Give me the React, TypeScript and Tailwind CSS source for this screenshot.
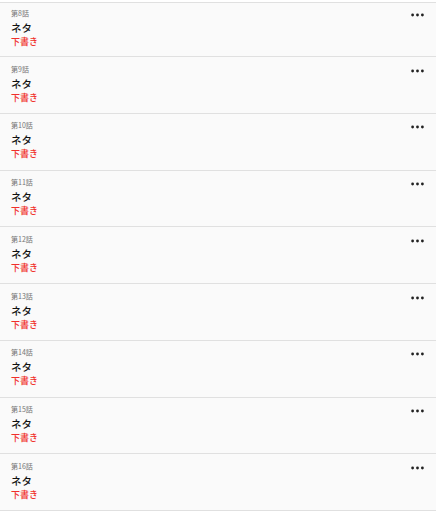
import React from 'react'

const episodes = [8, 9, 10, 11, 12, 13, 14, 15, 16]

function Dots() {
  return (
    <svg width="13" height="4" viewBox="0 0 13 4" className="block">
      <circle cx="1.6" cy="2" r="1.4" fill="#212121" />
      <circle cx="6.5" cy="2" r="1.4" fill="#212121" />
      <circle cx="11.4" cy="2" r="1.4" fill="#212121" />
    </svg>
  )
}

function EpisodeRow({ no, first }: { no: number; first: boolean }) {
  return (
    <div
      className={`flex justify-between border-b border-[#e0e0e0] pl-[11px] pr-[12px] ${
        first ? 'h-[54px] pt-[4.5px]' : 'h-[56.75px] pt-[6.5px]'
      }`}
    >
      <div className="flex flex-col">
        <div className="text-[7px] leading-[11px] text-[#757575]">第{no}話</div>
        <div className="text-[10.5px] font-medium leading-[17px] text-[#111]">ネタ</div>
        <div className="text-[9px] font-medium leading-[12px] text-[#f0302a]">下書き</div>
      </div>
      <div className="pt-[5px]">
        <Dots />
      </div>
    </div>
  )
}

export default function App() {
  return (
    <div
      className="h-[512px] w-[436px] overflow-hidden bg-white pt-[2px]"
      style={{ fontFamily: '"Noto Sans CJK JP", "Noto Sans", sans-serif' }}
    >
      <div className="border-t border-[#e0e0e0] bg-[#fafafa]">
        {episodes.map((n, i) => (
          <EpisodeRow key={n} no={n} first={i === 0} />
        ))}
      </div>
    </div>
  )
}
